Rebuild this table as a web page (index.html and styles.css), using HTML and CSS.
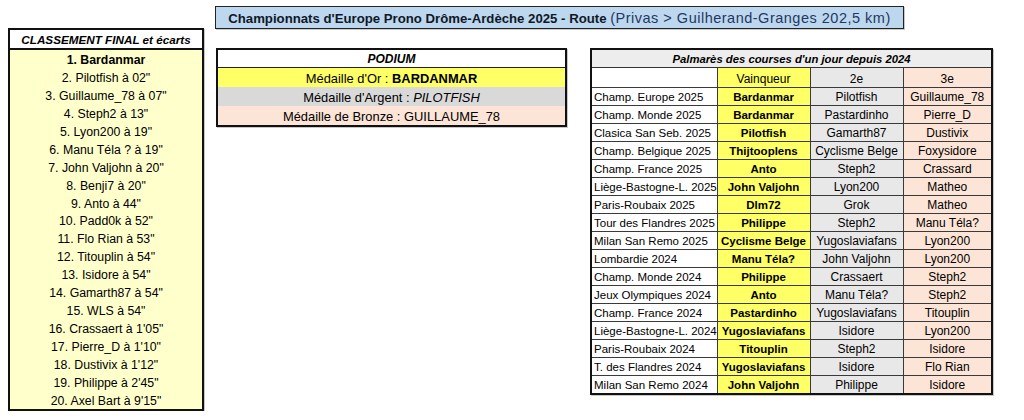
FILE: index.html
```html
<!DOCTYPE html>
<html lang="fr">
<head>
<meta charset="utf-8">
<title>Championnats d'Europe Prono Drôme-Ardèche 2025</title>
<link rel="stylesheet" href="styles.css">
</head>
<body>
<div class="page">
  <section class="ranking">
    <div class="ranking-head">CLASSEMENT FINAL et écarts</div>
    <ol class="ranking-list">
      <li class="first">1. Bardanmar</li>
      <li>2. Pilotfish à 02"</li>
      <li>3. Guillaume_78 à 07"</li>
      <li>4. Steph2 à 13"</li>
      <li>5. Lyon200 à 19"</li>
      <li>6. Manu Téla ? à 19"</li>
      <li>7. John Valjohn à 20"</li>
      <li>8. Benji7 à 20"</li>
      <li>9. Anto à 44"</li>
      <li>10. Padd0k à 52"</li>
      <li>11. Flo Rian à 53"</li>
      <li>12. Titouplin à 54"</li>
      <li>13. Isidore à 54"</li>
      <li>14. Gamarth87 à 54"</li>
      <li>15. WLS à 54"</li>
      <li>16. Crassaert à 1'05"</li>
      <li>17. Pierre_D à 1'10"</li>
      <li>18. Dustivix à 1'12"</li>
      <li>19. Philippe à 2'45"</li>
      <li>20. Axel Bart à 9'15"</li>
    </ol>
  </section>
  <div class="main">
    <h1 class="title"><b>Championnats d'Europe Prono Drôme-Ardèche 2025 - Route</b> <span class="route">(Privas &gt; Guilherand-Granges 202,5 km)</span></h1>
    <div class="boards">
      <table class="podium">
        <tr class="podium-head"><th>PODIUM</th></tr>
        <tr class="gold"><td>Médaille d'Or : <b>BARDANMAR</b></td></tr>
        <tr class="silver"><td>Médaille d'Argent : <i>PILOTFISH</i></td></tr>
        <tr class="bronze"><td>Médaille de Bronze : GUILLAUME_78</td></tr>
      </table>
      <table class="palmares">
        <colgroup>
          <col class="c-race"><col class="c-win"><col class="c-2"><col class="c-3">
        </colgroup>
        <tr class="pal-head"><th colspan="4">Palmarès des courses d'un jour depuis 2024</th></tr>
        <tr class="col-head"><td class="race"></td><td class="win">Vainqueur</td><td class="second">2e</td><td class="third">3e</td></tr>
        <tr><td class="race">Champ. Europe 2025</td><td class="win">Bardanmar</td><td class="second">Pilotfish</td><td class="third">Guillaume_78</td></tr>
        <tr><td class="race">Champ. Monde 2025</td><td class="win">Bardanmar</td><td class="second">Pastardinho</td><td class="third">Pierre_D</td></tr>
        <tr><td class="race">Clasica San Seb. 2025</td><td class="win">Pilotfish</td><td class="second">Gamarth87</td><td class="third">Dustivix</td></tr>
        <tr><td class="race">Champ. Belgique 2025</td><td class="win">Thijtooplens</td><td class="second">Cyclisme Belge</td><td class="third">Foxysidore</td></tr>
        <tr><td class="race">Champ. France 2025</td><td class="win">Anto</td><td class="second">Steph2</td><td class="third">Crassard</td></tr>
        <tr><td class="race">Liège-Bastogne-L. 2025</td><td class="win">John Valjohn</td><td class="second">Lyon200</td><td class="third">Matheo</td></tr>
        <tr><td class="race">Paris-Roubaix 2025</td><td class="win">Dlm72</td><td class="second">Grok</td><td class="third">Matheo</td></tr>
        <tr><td class="race">Tour des Flandres 2025</td><td class="win">Philippe</td><td class="second">Steph2</td><td class="third">Manu Téla?</td></tr>
        <tr><td class="race">Milan San Remo 2025</td><td class="win">Cyclisme Belge</td><td class="second">Yugoslaviafans</td><td class="third">Lyon200</td></tr>
        <tr><td class="race">Lombardie 2024</td><td class="win">Manu Téla?</td><td class="second">John Valjohn</td><td class="third">Lyon200</td></tr>
        <tr><td class="race">Champ. Monde 2024</td><td class="win">Philippe</td><td class="second">Crassaert</td><td class="third">Steph2</td></tr>
        <tr><td class="race">Jeux Olympiques 2024</td><td class="win">Anto</td><td class="second">Manu Téla?</td><td class="third">Steph2</td></tr>
        <tr><td class="race">Champ. France 2024</td><td class="win">Pastardinho</td><td class="second">Yugoslaviafans</td><td class="third">Titouplin</td></tr>
        <tr><td class="race">Liège-Bastogne-L. 2024</td><td class="win">Yugoslaviafans</td><td class="second">Isidore</td><td class="third">Lyon200</td></tr>
        <tr><td class="race">Paris-Roubaix 2024</td><td class="win">Titouplin</td><td class="second">Steph2</td><td class="third">Isidore</td></tr>
        <tr><td class="race">T. des Flandres 2024</td><td class="win">Yugoslaviafans</td><td class="second">Isidore</td><td class="third">Flo Rian</td></tr>
        <tr><td class="race">Milan San Remo 2024</td><td class="win">John Valjohn</td><td class="second">Philippe</td><td class="third">Isidore</td></tr>
      </table>
    </div>
  </div>
</div>
</body>
</html>
```

FILE: styles.css
```css
body {
  margin: 0;
  background: #fff;
  color: #000;
  font-family: "Liberation Sans", Arial, sans-serif;
  font-size: 12.3px;
}

.page {
  display: flex;
  align-items: flex-start;
  gap: 11px;
  padding: 6px 0 0 8px;
}

/* Left ranking */
.ranking {
  width: 196px;
  box-sizing: border-box;
  margin-top: 22px;
  border: 2px solid #111;
  background: #ffffcc;
  box-shadow: 1px 1px 0 #c8c8c8;
}

.ranking-head {
  height: 18px;
  line-height: 19px;
  border-bottom: 2px solid #111;
  background: #fff;
  text-align: center;
  font-size: 11.7px;
  font-weight: bold;
  font-style: italic;
  white-space: nowrap;
}

.ranking-list {
  list-style: none;
  margin: 0;
  padding: 0;
}

.ranking-list li {
  box-sizing: border-box;
  height: 17.95px;
  padding-top: 2px;
  line-height: 17.95px;
  text-align: center;
  white-space: nowrap;
}

.ranking-list .first {
  font-weight: bold;
}

/* Main area */
.main {
  display: flex;
  flex-direction: column;
}

.title {
  margin: 0;
  width: 689px;
  height: 23px;
  box-sizing: border-box;
  border: 1px solid #222;
  background: #bdd7ee;
  box-shadow: 1px 1px 0 #c8c8c8;
  text-align: center;
  font-size: 13.2px;
  font-weight: normal;
  line-height: 22px;
  color: #101828;
  white-space: nowrap;
}

.title .route {
  color: #1f3864;
  font-size: 14.5px;
  letter-spacing: 0.5px;
}

.boards {
  display: flex;
  align-items: flex-start;
  gap: 23px;
  margin: 19px 0 0 1px;
}

table {
  border-collapse: collapse;
}

td, th {
  padding: 0;
}

/* Podium */
.podium {
  width: 351px;
  border: 2px solid #111;
  box-shadow: 1px 1px 0 #c8c8c8;
  text-align: center;
  font-size: 12.9px;
}

.podium th {
  box-sizing: border-box;
  height: 17px;
  padding-top: 1px;
  line-height: 16px;
  font-size: 12px;
  font-weight: bold;
  font-style: italic;
  background: #fff;
  border-bottom: 1px solid #222;
}

.podium td {
  box-sizing: border-box;
  height: 19px;
  padding-top: 2px;
  line-height: 17px;
}

.podium .gold td { background: #ffff66; }
.podium .silver td { background: #d9d9d9; }
.podium .bronze td { background: #fce4d6; height: 20px; }

/* Palmares */
.palmares {
  width: 403px;
  table-layout: fixed;
  border: 2px solid #111;
  box-shadow: 1px 1px 0 #c8c8c8;
  font-size: 11.5px;
}

.c-race { width: 126px; }
.c-win { width: 93px; }
.c-2 { width: 93px; }
.c-3 { width: 89px; }

.pal-head th {
  box-sizing: border-box;
  height: 17px;
  padding-top: 1px;
  line-height: 16px;
  background: #ededed;
  font-size: 11.3px;
  font-weight: bold;
  font-style: italic;
  border-bottom: 1px solid #333;
}

.palmares td {
  box-sizing: border-box;
  height: 17.9px;
  padding-top: 2px;
  line-height: 15px;
  border: 1px solid #3a3a3a;
  text-align: center;
  white-space: nowrap;
  overflow: hidden;
}

.palmares .col-head td {
  height: 20px;
  padding-top: 3px;
  line-height: 16px;
}

.palmares td.race {
  text-align: left;
  padding-left: 2px;
  background: #fff;
}

.palmares td.win {
  background: #ffff66;
  font-weight: bold;
}

.palmares .col-head td.win {
  font-weight: normal;
  font-size: 12px;
}

.palmares td.second {
  background: #e8e8e8;
  font-size: 12px;
}

.palmares td.third {
  background: #fce4d6;
  font-size: 12px;
}
```
